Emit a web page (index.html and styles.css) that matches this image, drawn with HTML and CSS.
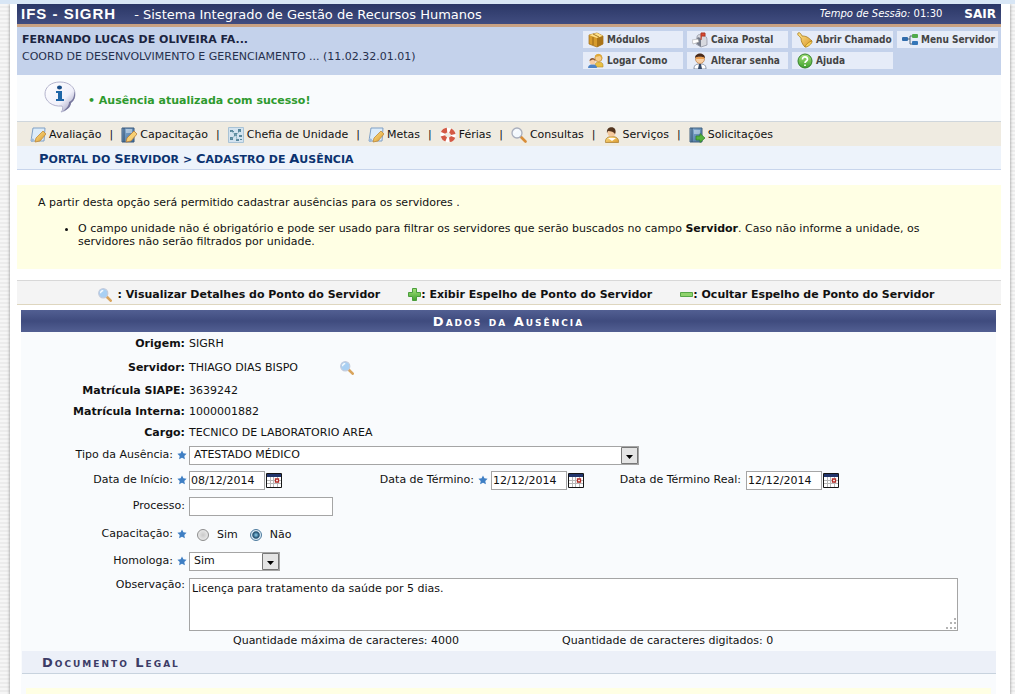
FILE: index.html
```html
<!DOCTYPE html>
<html lang="pt-BR">
<head>
<meta charset="utf-8">
<title>SIGRH - Cadastro de Ausência</title>
<link rel="stylesheet" href="styles.css">
</head>
<body>
<svg class="defs" aria-hidden="true">
  <defs>
    <linearGradient id="gold" x1="0" y1="0" x2="1" y2="1"><stop offset="0" stop-color="#ffe58a"/><stop offset="1" stop-color="#d9962c"/></linearGradient>
    <linearGradient id="blue" x1="0" y1="0" x2="1" y2="1"><stop offset="0" stop-color="#8fb4d8"/><stop offset="1" stop-color="#3f6c98"/></linearGradient>
    <linearGradient id="green" x1="0" y1="0" x2="0" y2="1"><stop offset="0" stop-color="#a6e27c"/><stop offset="1" stop-color="#3fa12c"/></linearGradient>
    <linearGradient id="balloon" x1="0" y1="0" x2="1" y2="1"><stop offset="0" stop-color="#ffffff"/><stop offset=".6" stop-color="#f0f0fa"/><stop offset="1" stop-color="#8f8fb4"/></linearGradient>
    <symbol id="note" viewBox="0 0 16 16"><path d="M3 1h12l-1 13H1z" fill="#dcecfa" stroke="#7f9fc4"/><path d="M1 11l3 1-1 3H1z" fill="#9db9d8"/><path d="M13 4l3 3-6 7-5 1 1-4z" fill="url(#gold)" stroke="#c08a3a" stroke-width=".8"/></symbol>
    <symbol id="book" viewBox="0 0 16 16"><path d="M1 1h12v14H1z" fill="url(#blue)" stroke="#38597c"/><path d="M3 1v14" stroke="#2e4a6b"/><path d="M5 3h6M5 5h6" stroke="#e3edf7"/></symbol>
    <symbol id="pencil" viewBox="0 0 16 16"><path d="M13 4l3 3-6 7-5 1 1-4z" fill="#f7cf72" stroke="#b67d38" stroke-width=".8"/></symbol>
    <symbol id="chart" viewBox="0 0 16 16"><path d="M.5.5h15v15H.5z" fill="#d3e3ef" stroke="#a9c3d6"/><path d="M2 3h3v2H2zM10 2h3v3h-3zM6 6h3v3H6zM2 10h3v3H2zM11 8h3v2h-3zM8 12h3v2H8zM5 4h1v1H5zM12 12h2v1h-2z" fill="#57869a"/><path d="M3 4l5 4 4-4M3 12l5-4 1 5" fill="none" stroke="#7ba7b5" stroke-width=".7"/></symbol>
    <symbol id="buoy" viewBox="0 0 16 16"><g transform="rotate(20 8 8)"><ellipse cx="8" cy="8" rx="5.4" ry="4.8" fill="none" stroke="#fff" stroke-width="4.600"/><ellipse cx="8" cy="8" rx="5.400" ry="4.800" fill="none" stroke="#d35a45" stroke-width="4.600" stroke-dasharray="4.800 3.200"/></g></symbol>
    <symbol id="lens" viewBox="0 0 16 16"><path d="M9.500 9.500l5 5" stroke="#d98d38" stroke-width="2.600" stroke-linecap="round"/><circle cx="6" cy="6" r="5" fill="#f3f8fd" stroke="#a9aebc" stroke-width="1.300"/><path d="M3.500 6a3 3 0 0 1 3-2.500" fill="none" stroke="#fff"/></symbol>
    <symbol id="lensblue" viewBox="0 0 16 16"><path d="M10 10l4.500 4.500" stroke="#d9a45c" stroke-width="3" stroke-linecap="round"/><circle cx="6" cy="6" r="5.200" fill="#a9d0f3" stroke="#c3cbdc" stroke-width="1.400"/><path d="M3 6a3 3 0 0 1 3-3" fill="none" stroke="#fff" stroke-width="1.300"/></symbol>
    <symbol id="person" viewBox="0 0 16 16"><path d="M1.500 15.500c-.5-4 2-6 6.500-6s7 2 6.500 6z" fill="url(#gold)" stroke="#a87a28" stroke-width=".7"/><circle cx="7.500" cy="5.500" r="4" fill="#f5c99c"/><path d="M3 6C2 0 9-1 11 2c1 2 .5 4 0 5C10 5 7 4 4 4z" fill="#53351f"/><path d="M4 11l4 3 4-3" fill="#fff"/></symbol>
    <symbol id="export" viewBox="0 0 16 16"><path d="M1 1h12v14H1z" fill="url(#blue)" stroke="#41617f"/><path d="M3 1v14" stroke="#2f4d6c"/><path d="M5 4h6M5 6h6" stroke="#d9e8f5"/><path d="M7 9h4V6.500L16 11l-5 4.500V13H7z" fill="#55b33d" stroke="#2d7f25" stroke-width=".7"/></symbol>
    <symbol id="box" viewBox="0 0 16 16"><path d="M1 3l8-2 6 3v8l-6 3-8-3z" fill="#d69b2c" stroke="#9b6a18" stroke-width=".7"/><path d="M1 3l8-2 6 3-6 2z" fill="#ffe28a"/><path d="M9 6l6-2v8l-6 3z" fill="#aa7418"/><path d="M5 2l6 3M5 5v8" fill="none" stroke="#8b5c13" stroke-width=".8"/></symbol>
    <symbol id="mail" viewBox="0 0 16 16"><path d="M5 5c0-2 2-3 4-2l4 1c2 1 2 3 2 5v4l-6 2-5-3z" fill="#d7d9df" stroke="#868b99" stroke-width=".7"/><path d="M9 15V8c0-3-4-4-4-1v5z" fill="#767c8a"/><path d="M0 8l6-1 1 3-6 2z" fill="#fff" stroke="#999" stroke-width=".5"/><path d="M9 8V1h4v3h-3" fill="#d94a30" stroke="#b03522"/></symbol>
    <symbol id="bell" viewBox="0 0 16 16"><path d="M1 1c2-1 3 1 4 3 4 0 6 1 10 5l-7 6C5 12 4 9 4 6 2 4 0 3 1 1z" fill="url(#gold)" stroke="#a67818" stroke-width=".8"/><path d="M15 9c1 2-5 7-7 6 0-2 5-6 7-6z" fill="#fbd255" stroke="#a67818" stroke-width=".7"/></symbol>
    <symbol id="tree" viewBox="0 0 16 12"><path d="M5 5h3V2h3M8 5v5h3" fill="none" stroke="#567" stroke-width="1"/><rect x="0" y="3" width="6" height="4" rx="1" fill="#316cab"/><rect x="10" y="0" width="6" height="4" rx="1" fill="#51aa4c"/><rect x="10" y="7" width="6" height="4" rx="1" fill="#3476b8"/></symbol>
    <symbol id="people" viewBox="0 0 16 16"><path d="M7 12c0-4 8-4 8 0v2H8z" fill="#e9bf43" stroke="#b58c23" stroke-width=".6"/><circle cx="10.500" cy="5" r="3.600" fill="#f6cd8b" stroke="#c78e32" stroke-width=".8"/><path d="M7 4c1-5 8-3 7 2l-2-3z" fill="#dfaa38"/><path d="M0 15c0-5 9-5 9 0z" fill="#4d83c5"/><circle cx="4.500" cy="8.500" r="3" fill="#f7cda5"/><path d="M1.500 8c0-4 6-4 6 0L5 6.500z" fill="#8a5936"/></symbol>
    <symbol id="tie" viewBox="0 0 16 16"><path d="M2 16c0-4 2-5 6-5s6 1 6 5z" fill="#fff" stroke="#6b7892" stroke-width=".8"/><circle cx="8" cy="6" r="4.500" fill="#f8cfa5" stroke="#b97b44" stroke-width=".7"/><path d="M3 5c0-6 10-6 10 0-2-1-7-2-10 0z" fill="#4a2b1a"/><path d="M4 5h8" stroke="#e2882e" stroke-width="1.400"/><path d="M7 11h2l1 5H6z" fill="#354866"/></symbol>
    <symbol id="help" viewBox="0 0 16 16"><circle cx="8" cy="8" r="7" fill="url(#green)" stroke="#35812b"/><path d="M5.500 6.500c0-4 5-3 5 0 0 1.500-2.500 1.500-2.500 3.500M8 11.500v1.500" fill="none" stroke="#fff" stroke-width="1.700"/></symbol>
    <symbol id="plus" viewBox="0 0 13 13"><path d="M4.500.5h4v4h4v4h-4v4h-4v-4h-4v-4h4z" fill="url(#green)" stroke="#4a9e3c"/></symbol>
    <symbol id="minus" viewBox="0 0 13 13"><path d="M.5 4.500h12v4H.5z" fill="#8fd36c" stroke="#57a748"/></symbol>
    <symbol id="star" viewBox="0 0 10 10"><path d="M5 .5l1.400 2.800 3.200.5-2.300 2.200.6 3.300L5 7.800 2.100 9.300l.6-3.300L.4 3.800l3.200-.5z" fill="#3f7fc4"/></symbol>
    <symbol id="calendar" viewBox="0 0 16 15"><path d="M.5.5h15v14H.5z" fill="#fff" stroke="#171717"/><path d="M1 1h14v3H1z" fill="#22356c"/><path d="M1 7.500h14M1 10.500h14M4.500 4v10M7.500 4v10M11.500 4v10" stroke="#b8b8b8"/><path d="M9.500 6h3v3h-3z" fill="#fff" stroke="#b52d27" stroke-width="1.300"/></symbol>
    <symbol id="info" viewBox="0 0 32 32"><path d="M16 1c9 0 15 5 15 12 0 5-3 8-5 9 0 4-4 8-9 9 2-2 2-4 1-6C8 26 1 20 1 13 1 6 7 1 16 1z" fill="url(#balloon)" stroke="#b4b4cd"/><path d="M30 10c1 6-2 10-5 11 0 4-3 7-6 9 6-1 8-6 8-8 4-3 5-8 3-12z" fill="#77779d"/><ellipse cx="15.500" cy="6.500" rx="2.500" ry="2" fill="#164b86"/><path d="M12 10h6v8h2v2h-8v-2h2v-6h-2z" fill="#1f66a7"/></symbol>
  </defs>
</svg>
<div class="page">
  <header class="topbar">
    <h1 class="brand">IFS - SIGRH</h1>
    <span class="system">- Sistema Integrado de Gestão de Recursos Humanos</span>
    <span class="session"><em>Tempo de Sessão:</em> 01:30</span>
    <a class="exit" href="#">SAIR</a>
  </header>
  <section class="userbar">
    <div class="user">
      <strong>FERNANDO LUCAS DE OLIVEIRA FA...</strong>
      <span>COORD DE DESENVOLVIMENTO E GERENCIAMENTO ... (11.02.32.01.01)</span>
    </div>
    <nav class="tools">
      <a href="#"><svg class="icon"><use href="#box"/></svg>Módulos</a>
      <a href="#"><svg class="icon"><use href="#mail"/></svg>Caixa Postal</a>
      <a href="#"><svg class="icon"><use href="#bell"/></svg>Abrir Chamado</a>
      <a href="#"><svg class="icon"><use href="#tree"/></svg>Menu Servidor</a>
      <a href="#"><svg class="icon"><use href="#people"/></svg>Logar Como</a>
      <a href="#"><svg class="icon"><use href="#tie"/></svg>Alterar senha</a>
      <a href="#"><svg class="icon"><use href="#help"/></svg>Ajuda</a>
    </nav>
  </section>
  <section class="message">
    <svg class="info"><use href="#info"/></svg>
    <p>• Ausência atualizada com sucesso!</p>
  </section>
  <nav class="menu">
    <a href="#"><svg class="icon"><use href="#note"/></svg>Avaliação</a><span>|</span>
    <a href="#"><svg class="icon"><use href="#book"/><use href="#pencil"/></svg>Capacitação</a><span>|</span>
    <a href="#"><svg class="icon"><use href="#chart"/></svg>Chefia de Unidade</a><span>|</span>
    <a href="#"><svg class="icon"><use href="#note"/></svg>Metas</a><span>|</span>
    <a href="#"><svg class="icon"><use href="#buoy"/></svg>Férias</a><span>|</span>
    <a href="#"><svg class="icon"><use href="#lens"/></svg>Consultas</a><span>|</span>
    <a href="#"><svg class="icon"><use href="#person"/></svg>Serviços</a><span>|</span>
    <a href="#"><svg class="icon"><use href="#export"/></svg>Solicitações</a>
  </nav>
  <h2 class="crumb"><span class="initial">P</span>ortal do <span class="initial">S</span>ervidor &gt; <span class="initial">C</span>adastro de <span class="initial">A</span>usência</h2>
  <section class="intro">
    <p>A partir desta opção será permitido cadastrar ausências para os servidores .</p>
    <ul>
      <li>O campo unidade não é obrigatório e pode ser usado para filtrar os servidores que serão buscados no campo <strong>Servidor</strong>. Caso não informe a unidade, os servidores não serão filtrados por unidade.</li>
    </ul>
  </section>
  <div class="legend">
    <span class="view"><svg class="lens"><use href="#lensblue"/></svg>: Visualizar Detalhes do Ponto do Servidor</span>
    <span><svg class="mini"><use href="#plus"/></svg>: Exibir Espelho de Ponto do Servidor</span>
    <span><svg class="mini"><use href="#minus"/></svg>: Ocultar Espelho de Ponto do Servidor</span>
  </div>
  <form class="form">
    <h2 class="caption">Dados da Ausência</h2>
    <div class="row"><strong class="label">Origem:</strong><span>SIGRH</span></div>
    <div class="row"><strong class="label">Servidor:</strong><span>THIAGO DIAS BISPO</span><button type="button" class="search" aria-label="Visualizar detalhes"><svg class="lens"><use href="#lensblue"/></svg></button></div>
    <div class="row short"><strong class="label">Matrícula SIAPE:</strong><span>3639242</span></div>
    <div class="row short"><strong class="label">Matrícula Interna:</strong><span>1000001882</span></div>
    <div class="row short"><strong class="label">Cargo:</strong><span>TECNICO DE LABORATORIO AREA</span></div>
    <div class="row">
      <label class="label" for="tipo">Tipo da Ausência:<svg class="star"><use href="#star"/></svg></label>
      <span class="select wide"><select id="tipo"><option>ATESTADO MÉDICO</option></select><svg viewBox="0 0 17 17"><path d="M.5.5h16v16H.5z" fill="#e4e4e4" stroke="#777"/><path d="M5 8h7l-3.500 4z" fill="#000"/></svg></span>
    </div>
    <div class="row tall">
      <label class="label" for="inicio">Data de Início:<svg class="star"><use href="#star"/></svg></label>
      <input class="date" id="inicio" value="08/12/2014"><button type="button" class="cal" aria-label="Calendário, data de início"><svg><use href="#calendar"/></svg></button>
      <label class="second" for="termino">Data de Término:<svg class="star"><use href="#star"/></svg></label>
      <input class="date" id="termino" value="12/12/2014"><button type="button" class="cal" aria-label="Calendário, data de término"><svg><use href="#calendar"/></svg></button>
      <label class="third" for="real">Data de Término Real:</label>
      <input class="date" id="real" value="12/12/2014"><button type="button" class="cal" aria-label="Calendário, término real"><svg><use href="#calendar"/></svg></button>
    </div>
    <div class="row tall"><label class="label" for="processo">Processo:</label><input class="process" id="processo"></div>
    <div class="row taller">
      <span class="label" id="cap">Capacitação:<svg class="star"><use href="#star"/></svg></span>
      <span class="radios" role="radiogroup" aria-labelledby="cap"><label><input type="radio" name="cap">Sim</label><label><input type="radio" name="cap" checked>Não</label></span>
    </div>
    <div class="row">
      <label class="label" for="homologa">Homologa:<svg class="star"><use href="#star"/></svg></label>
      <span class="select"><select id="homologa"><option>Sim</option></select><svg viewBox="0 0 17 17"><path d="M.5.5h16v16H.5z" fill="#e4e4e4" stroke="#777"/><path d="M5 8h7l-3.500 4z" fill="#000"/></svg></span>
    </div>
    <div class="row notes">
      <label class="label" for="obs">Observação:</label>
      <div class="area">
        <textarea id="obs">Licença para tratamento da saúde por 5 dias.</textarea>
        <svg class="grip" viewBox="0 0 12 12"><path d="M9 0h2v2H9zM5 4h2v2H5zM9 4h2v2H9zM1 9h2v2H1zM5 9h2v2H5zM9 9h2v2H9z" fill="#b4b4b4"/></svg>
        <div class="counts"><span>Quantidade máxima de caracteres: 4000</span><span>Quantidade de caracteres digitados: 0</span></div>
      </div>
    </div>
    <h3 class="subcaption">Documento Legal</h3>
    <div class="tip"></div>
  </form>
</div>
</body>
</html>
```
FILE: styles.css
```css
* { box-sizing: border-box; }
html { height: 100%; overflow: hidden; }
body {
  margin: 0;
  min-height: 100%;
  padding: 0 5px 0 10px;
  border-top: 4px solid #d8e6f5;
  background: repeating-linear-gradient(#f6f6f6 0 2px, #ececec 2px 4px);
  color: #111;
  font: 11px/14px Verdana, "DejaVu Sans", sans-serif;
}
h1, h2, h3, p, ul { margin: 0; padding: 0; }
a { color: inherit; text-decoration: none; }
button { padding: 0; border: 0; background: none; cursor: pointer; }
svg { display: block; flex: none; }
.defs { position: absolute; width: 0; height: 0; }
.icon { width: 16px; height: 16px; }
.mini { width: 13px; height: 13px; }
.lens { width: 14px; height: 14px; }

.page {
  min-height: 690px;
  padding: 0 9px 0 7px;
  background: #fff;
  box-shadow: 0 0 3px #888;
}

.topbar {
  display: flex;
  align-items: center;
  height: 23px;
  padding: 0 5px 0 4px;
  border-bottom: 3px solid #c9a283;
  background: linear-gradient(#2b3766, #414d80);
  color: #fff;
}
.brand { font: bold 15px/20px "Liberation Sans", Arial, sans-serif; letter-spacing: 1px; }
.system { margin-left: 18px; padding-top: 2px; font-size: 13px; }
.session { margin-left: auto; font-size: 10px; }
.exit { margin-left: 22px; font-size: 12px; font-weight: bold; }

.userbar {
  display: flex;
  justify-content: space-between;
  height: 48px;
  padding: 4px 3px 0 5px;
  background: #c4d2eb;
}
.user { display: flex; flex-direction: column; gap: 3px; padding-top: 2px; color: #26304d; }
.user strong { color: #1b2440; }
.tools {
  display: grid;
  grid-template-columns: 100px 101px 101px 101px;
  grid-auto-rows: 17px;
  gap: 4px;
}
.tools a {
  display: flex;
  align-items: center;
  gap: 3px;
  padding-left: 5px;
  background: #e6ecf8;
  color: #444;
  font: bold 10px/17px Tahoma, "DejaVu Sans Condensed", "DejaVu Sans", sans-serif;
  white-space: nowrap;
}

.message { display: flex; height: 46px; padding: 6px 0 0 27px; background: #f9fbfd; }
.info { width: 32px; height: 32px; }
.message p { padding: 13px 0 0 12px; color: #2e9a2e; font-weight: bold; }

.menu {
  display: flex;
  align-items: center;
  gap: 8px;
  height: 25px;
  padding: 2px 0 0 13px;
  border-top: 1px solid #cfd6dc;
  background: #efebe1;
}
.menu a { display: flex; align-items: center; gap: 3px; }

.crumb {
  height: 24px;
  padding-left: 22px;
  border-bottom: 1px solid #c8d5ec;
  background: #edf3fb;
  color: #0c3370;
  font-size: 11px;
  line-height: 26px;
  text-transform: uppercase;
}
.initial { font-size: 13px; }

.intro { margin-top: 15px; padding: 11px 33px 21px 21px; background: #ffffe4; }
.intro ul { margin: 12px 0 0 40px; line-height: 13px; }

.legend {
  display: flex;
  justify-content: center;
  gap: 28px;
  height: 25px;
  margin-top: 11px;
  padding: 7px 0 0 14px;
  border-top: 1px solid #d8d8d8;
  border-bottom: 1px solid #ded6bf;
  background: #f4f4f4;
  font-weight: bold;
  white-space: nowrap;
}
.legend span { display: flex; }
.legend .view { gap: 6px; }

.form { margin: 5px 5px 0 4px; background: #f9fbfd; }
.caption {
  height: 22px;
  background: linear-gradient(#525f92, #3f4b7e 50%, #525f92);
  color: #fff;
  font-size: 13px;
  line-height: 24px;
  font-variant: small-caps;
  letter-spacing: 2px;
  text-align: center;
}
.row { display: flex; align-items: center; min-height: 24px; }
.short { min-height: 21px; }
.tall { min-height: 26px; }
.taller { min-height: 30px; }
.label { display: flex; justify-content: flex-end; align-items: center; flex: none; width: 168px; padding-right: 4px; }
.star { width: 10px; height: 10px; margin: 0 -2px 0 4px; }
.search { margin-left: 42px; }
input, select, textarea {
  margin: 0;
  border: 1px solid #a5a5a5;
  border-radius: 0;
  background: #fff;
  color: #111;
  font: inherit;
}
.date { width: 76px; height: 19px; padding: 0 1px; }
.process { width: 144px; height: 19px; }
.cal { margin-left: 1px; }
.cal svg { width: 16px; height: 15px; }
.second { display: flex; align-items: center; justify-content: flex-end; width: 113px; margin: 0 5px 0 91px; }
.third { width: 129px; margin: 0 5px 0 28px; text-align: right; }
.select { position: relative; width: 91px; }
.wide { width: 450px; }
.select select { display: block; width: 100%; height: 19px; padding: 0 20px 0 4px; appearance: none; }
.select svg { position: absolute; top: 1px; right: 1px; width: 17px; height: 17px; pointer-events: none; }
.radios { display: flex; gap: 12px; padding: 2px 0 0 8px; }
.radios label { display: flex; align-items: center; gap: 8px; }
.radios input {
  width: 12px;
  height: 12px;
  border: 1px solid #8d8d8d;
  border-radius: 50%;
  background: radial-gradient(#c9c9c9, #f4f4f4);
  appearance: none;
}
.radios input:checked { border-color: #4c7a9e; background: radial-gradient(#8fd0ee, #1d4a6b 45%, #dcebf5 60%); }
.notes { align-items: flex-start; padding-top: 5px; }
.area { position: relative; flex: 1; margin-right: 38px; }
.area textarea { display: block; width: 100%; height: 53px; padding: 3px 2px; resize: none; }
.grip { position: absolute; top: 40px; right: 1px; width: 12px; height: 12px; }
.counts { display: flex; gap: 103px; padding: 3px 0 3px 44px; }
.subcaption {
  height: 23px;
  margin-left: 1px;
  padding-left: 20px;
  border-bottom: 1px solid #c8d3de;
  background: #ecf0f8;
  color: #3c3c66;
  font-size: 13px;
  line-height: 24px;
  font-variant: small-caps;
  letter-spacing: 2px;
}
.tip { height: 20px; margin: 14px 5px 0; background: #ffffe4; }
```
